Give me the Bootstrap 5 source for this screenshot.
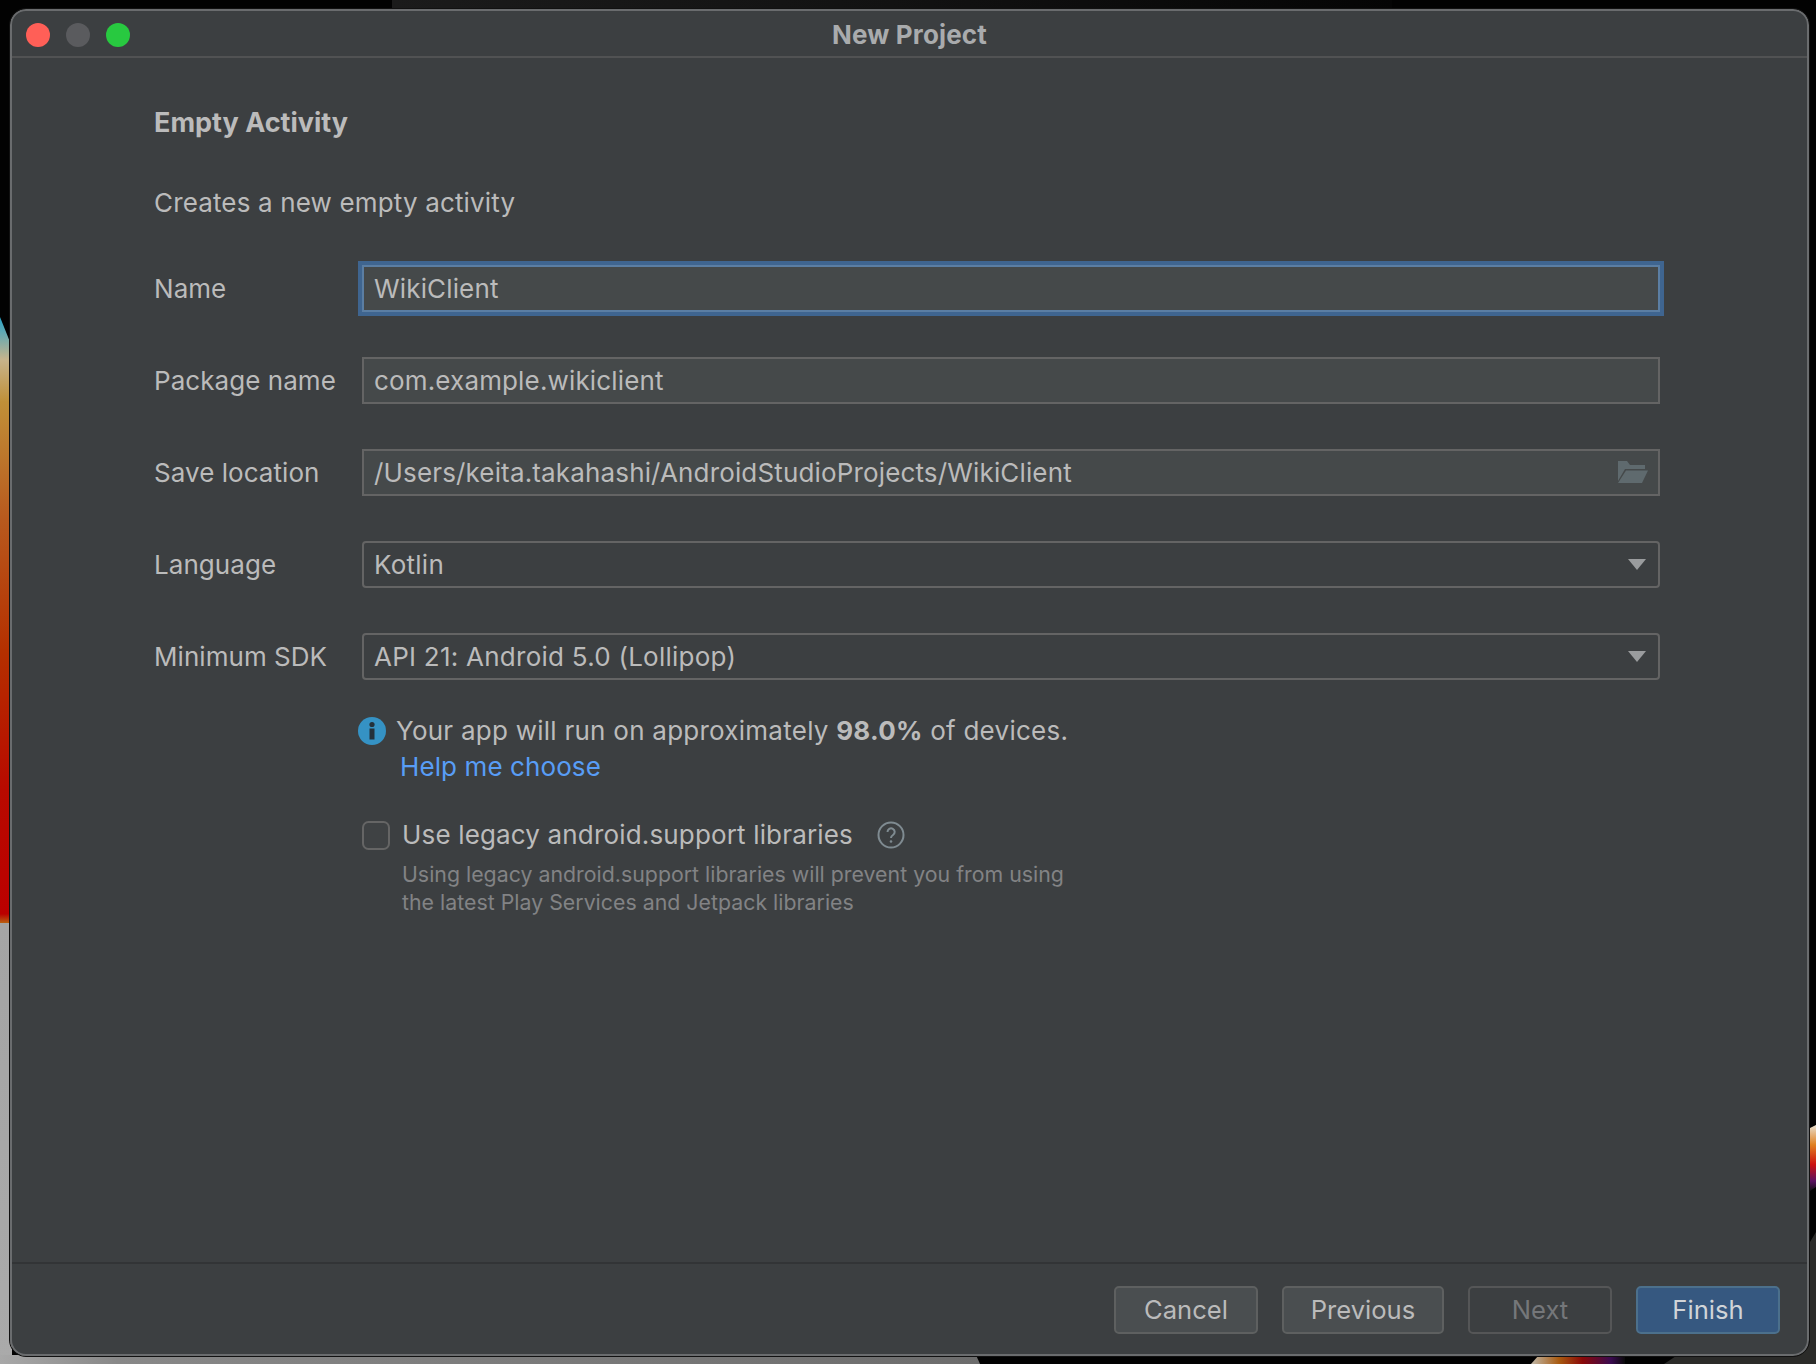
<!doctype html>
<html lang="en">
<head>
<meta charset="utf-8">
<title>New Project</title>
<link href="https://cdn.jsdelivr.net/npm/bootstrap@5.3.0/dist/css/bootstrap.min.css" rel="stylesheet">
<style>
html,body{height:100%}
body{background:#020202;font-family:"Inter","Liberation Sans",sans-serif;color:#bbb;overflow:hidden;font-size:26px}
.wallpaper{position:absolute;inset:0;width:100%;height:100%}
.page-frame{position:relative;height:1364px;padding:9px 7px 8px 10px}
.ide-window{height:100%;background:#3c3f41;border:2px solid #6a6c6e;border-radius:16px;outline:1px solid #111;overflow:hidden}
.title-bar{height:47px;border-bottom:2px solid #515253;padding:3px 14px 0;position:relative}
.traffic{width:24px;height:24px;border-radius:50%;display:block}
.t-red{background:#ff5f57}.t-gray{background:#5a5b5e}.t-green{background:#28c940}
.title-text{font-size:26px;font-weight:700;color:#a9abad;letter-spacing:.15px}
.lights{gap:16px}
.form-area{padding:49px 0 0 142px;width:1650px}
.heading-text{font-size:27px;font-weight:700;color:#bbb;line-height:32px;margin-bottom:48px}
.sub-text{line-height:32px;margin-bottom:46px;letter-spacing:.15px}
.form-line{height:47px;margin-bottom:45px}
.form-line label{width:208px;flex:none;line-height:32px;margin:0;letter-spacing:.05px}
.form-line .form-control,.form-line .form-select{width:1298px;flex:none;height:47px;border-radius:0;background-color:#45494a;border:2px solid #646464;color:#bbb;font-size:26px;padding:0 10px;font-family:inherit;box-shadow:none;letter-spacing:.15px}
.form-line .form-control.is-focused{border-color:#5b7ea3;outline:4px solid #3f6590;outline-offset:0;background-color:#45494a}
.form-line .form-select{background-color:#3c3f41;border-radius:4px;letter-spacing:.25px;background-image:url("data:image/svg+xml,%3Csvg xmlns='http://www.w3.org/2000/svg' viewBox='0 0 18 11'%3E%3Cpath fill='%239a9c9e' d='M0 0h18l-9 11z'/%3E%3C/svg%3E");background-size:18px 11px;background-position:right 12px center}
.folder-ico{position:absolute;right:12px;top:12px;width:30px;height:23px}
.note-area{padding-left:208px;margin-top:-12px}
.info-ico{width:28px;height:28px;flex:none;margin-right:10px;margin-left:-4px}
.note-line{line-height:36px;letter-spacing:.25px}
.note-line b{font-weight:700}
.help-link{color:#589df6;text-decoration:none;margin-left:38px;line-height:36px;display:block;letter-spacing:.1px}
.legacy-line{margin-top:34px}
.legacy-check{width:28px;height:29px;border:2px solid #656565;border-radius:4px;background:#3f4244;flex:none;margin:0 12px 0 0;appearance:none;padding:0}
.legacy-label{line-height:32px;letter-spacing:.16px}
.qmark{width:28px;height:28px;margin-left:24px}
.legacy-note{font-size:21.3px;line-height:28px;color:#828385;margin:9px 0 0 40px;letter-spacing:.02px}
.foot-bar{border-top:2px solid #323436;height:92px;padding:22px 27px 0 0;gap:24px}
.foot-bar .btn{height:48px;border-radius:5px;font-size:25.6px;padding:0;color:#bbb;background:#4a4e50;border:2px solid #5e6060;width:144px;font-family:inherit;opacity:1}
.foot-bar .btn.btn-wide{width:162px}
.foot-bar .btn.btn-off{background:#3c3f41;border-color:#555657;color:#75777a}
.foot-bar .btn.btn-go{background:#365880;border-color:#4c708c;color:#d0d4d8}
</style>
</head>
<body>
<svg class="wallpaper" viewBox="0 0 1816 1364" preserveAspectRatio="none" aria-hidden="true">
<defs>
<linearGradient id="lg" x1="0" y1="0" x2="0" y2="1">
<stop offset="0" stop-color="#27a3c8"/><stop offset=".07" stop-color="#c7b48c"/><stop offset=".14" stop-color="#c09038"/><stop offset=".33" stop-color="#b85a1e"/><stop offset=".55" stop-color="#b53000"/><stop offset=".78" stop-color="#b80a00"/><stop offset=".985" stop-color="#bb0000"/><stop offset="1" stop-color="#b86010"/>
</linearGradient>
<linearGradient id="bg" x1="0" y1="0" x2="1" y2="0">
<stop offset="0" stop-color="#a8a8a8"/><stop offset=".12" stop-color="#888"/><stop offset="1" stop-color="#6c6c6c"/>
</linearGradient>
<linearGradient id="tg" x1="0" y1="0" x2="1" y2="0">
<stop offset="0" stop-color="#1b1b1b"/><stop offset=".5" stop-color="#121212"/><stop offset="1" stop-color="#050505"/>
</linearGradient>
<linearGradient id="rg" x1="0" y1="0" x2="0" y2="1">
<stop offset="0" stop-color="#e8e0d0"/><stop offset=".3" stop-color="#e08020"/><stop offset=".6" stop-color="#cc1010"/><stop offset=".85" stop-color="#5a1060"/><stop offset="1" stop-color="#111"/>
</linearGradient>
<linearGradient id="bc" x1="0" y1="0" x2="1" y2="0">
<stop offset="0" stop-color="#c0b8a8"/><stop offset=".3" stop-color="#a85a10"/><stop offset=".55" stop-color="#8a0808"/><stop offset=".85" stop-color="#3a0a50"/><stop offset="1" stop-color="#0a0a0a"/>
</linearGradient>
<linearGradient id="vg" x1="0" y1="0" x2="0" y2="1">
<stop offset="0" stop-color="#a4a4a4"/><stop offset="1" stop-color="#aaa"/>
</linearGradient>
</defs>
<path fill="url(#tg)" d="M392 0h1000v9H392z"/>
<path fill="url(#lg)" d="M0 317l12 30v576H0z"/>
<path fill="url(#vg)" d="M0 923h12v441H0z"/>
<path fill="url(#bg)" d="M0 1355h976l4 9H0z"/>
<path fill="url(#bc)" d="M1531 1364l8-9h86v9z"/>
<path fill="url(#rg)" d="M1810 1128l6-3v62l-6 4z"/>
<path fill="#2b2b29" d="M1816 1232v132h-152l12-8h120l14-14v-100z"/>
</svg>
<div class="page-frame">
<div class="ide-window d-flex flex-column">
  <div class="title-bar d-flex align-items-center flex-shrink-0">
    <div class="lights d-flex">
      <span class="traffic t-red"></span><span class="traffic t-gray"></span><span class="traffic t-green"></span>
    </div>
    <div class="title-text position-absolute top-50 start-50 translate-middle">New Project</div>
  </div>
  <div class="form-area flex-grow-1">
    <div class="heading-text">Empty Activity</div>
    <div class="sub-text">Creates a new empty activity</div>
    <div class="form-line d-flex align-items-center">
      <label for="f-name">Name</label>
      <input id="f-name" class="form-control is-focused" type="text" value="WikiClient">
    </div>
    <div class="form-line d-flex align-items-center">
      <label for="f-pkg">Package name</label>
      <input id="f-pkg" class="form-control" type="text" value="com.example.wikiclient">
    </div>
    <div class="form-line d-flex align-items-center">
      <label for="f-loc">Save location</label>
      <div class="position-relative">
        <input id="f-loc" class="form-control" type="text" value="/Users/keita.takahashi/AndroidStudioProjects/WikiClient">
        <svg class="folder-ico" viewBox="0 0 30 23" aria-hidden="true"><path fill="#5f6a6e" d="M0 0h9l3 4h15v4H7L0 20zM8 9.500h22L24 22H0z"/></svg>
      </div>
    </div>
    <div class="form-line d-flex align-items-center">
      <label for="f-lang">Language</label>
      <select id="f-lang" class="form-select"><option>Kotlin</option></select>
    </div>
    <div class="form-line d-flex align-items-center">
      <label for="f-sdk">Minimum SDK</label>
      <select id="f-sdk" class="form-select"><option>API 21: Android 5.0 (Lollipop)</option></select>
    </div>
    <div class="note-area">
      <div class="d-flex align-items-center note-line">
        <svg class="info-ico" viewBox="0 0 28 28" aria-hidden="true"><circle cx="14" cy="14" r="14" fill="#3592c4"/><rect x="11.500" y="11.500" width="5" height="11" fill="#24303a"/><circle cx="14" cy="7.500" r="2.600" fill="#24303a"/></svg>
        <span>Your app will run on approximately <b>98.0%</b> of devices.</span>
      </div>
      <a class="help-link" href="#">Help me choose</a>
      <div class="legacy-line d-flex align-items-center">
        <input class="legacy-check form-check-input" type="checkbox" id="f-legacy">
        <label class="legacy-label" for="f-legacy">Use legacy android.support libraries</label>
        <svg class="qmark" viewBox="0 0 28 28" aria-hidden="true"><circle cx="14" cy="14" r="12.500" fill="none" stroke="#7f8b91" stroke-width="2"/><path d="M10.500 11a3.600 3.600 0 1 1 5.500 3c-1.300.9-2 1.500-2 3" fill="none" stroke="#7f8b91" stroke-width="2"/><circle cx="14" cy="20.500" r="1.300" fill="#7f8b91"/></svg>
      </div>
      <div class="legacy-note">Using legacy android.support libraries will prevent you from using<br>the latest Play Services and Jetpack libraries</div>
    </div>
  </div>
  <div class="foot-bar d-flex justify-content-end flex-shrink-0">
    <button type="button" class="btn">Cancel</button>
    <button type="button" class="btn btn-wide">Previous</button>
    <button type="button" class="btn btn-off">Next</button>
    <button type="button" class="btn btn-go">Finish</button>
  </div>
</div>
</div>
<script src="https://cdn.jsdelivr.net/npm/bootstrap@5.3.0/dist/js/bootstrap.bundle.min.js"></script>
</body>
</html>
